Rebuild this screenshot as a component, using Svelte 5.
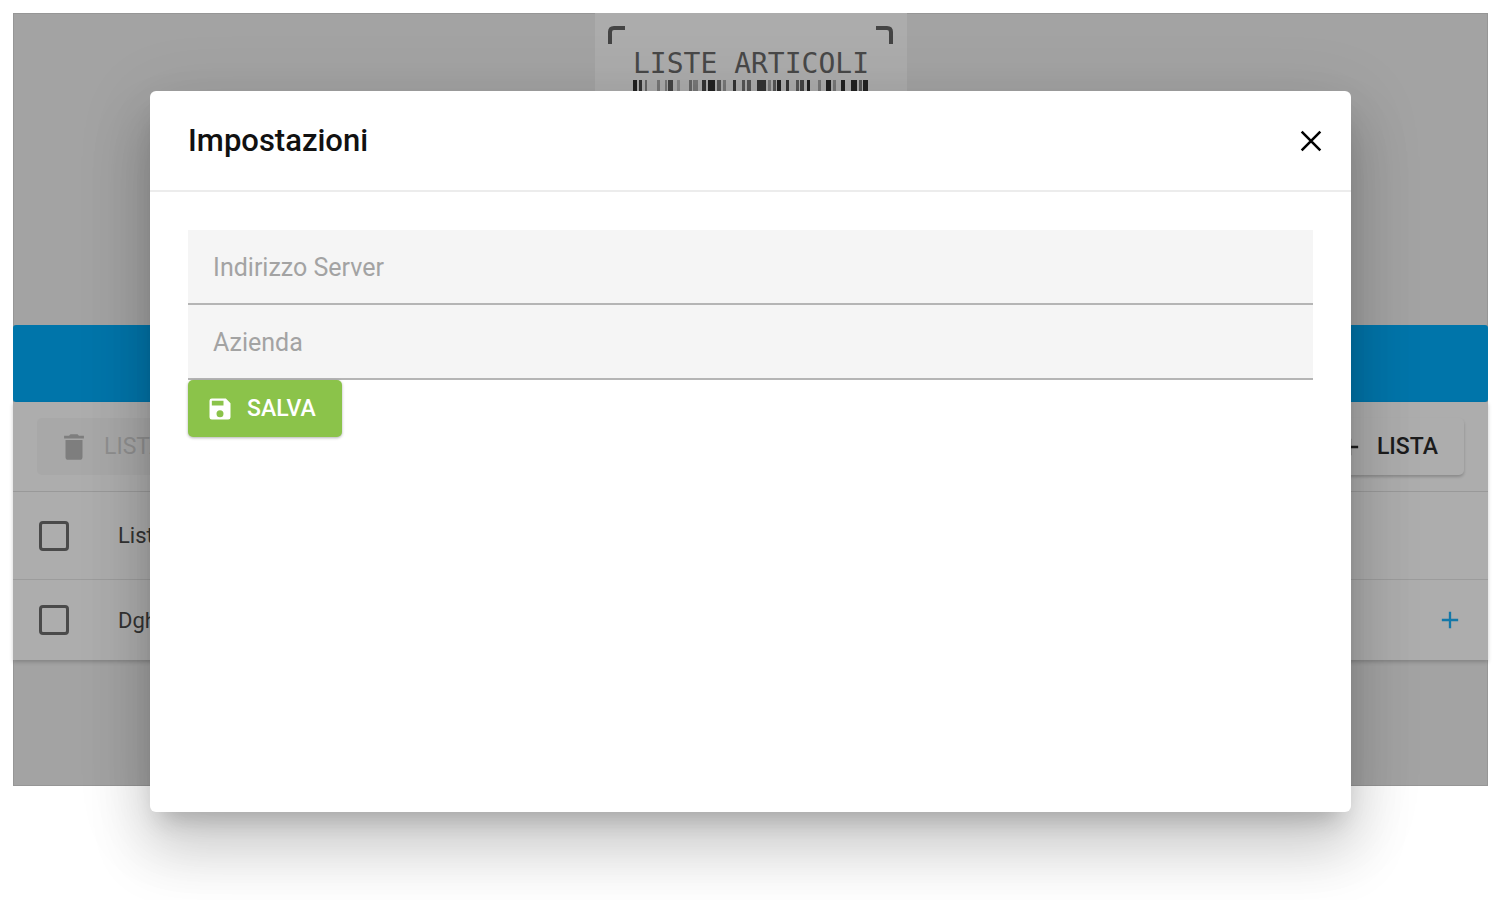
<script>
  let server = $state('');
  let company = $state('');
  let open = $state(true);

  let lists = $state([
    { name: 'Lista', selected: false, canAdd: false },
    { name: 'Dgh', selected: false, canAdd: true }
  ]);

  // [x, width, shade] of every bar under the logo text
  const bars = [
    [38, 4, '#222'], [44, 3, '#333'], [50, 2, '#666'], [62, 3, '#777'],
    [70, 2, '#777'], [73, 5, '#444'], [82, 3, '#888'], [94, 3, '#666'],
    [98, 5, '#777'], [107, 4, '#333'], [113, 7, '#222'], [122, 4, '#555'],
    [128, 3, '#777'], [138, 3, '#333'], [147, 3, '#555'], [152, 4, '#555'],
    [162, 9, '#333'], [173, 3, '#777'], [178, 3, '#555'], [182, 4, '#222'],
    [191, 3, '#333'], [201, 3, '#555'], [205, 4, '#444'], [212, 3, '#222'],
    [223, 3, '#777'], [231, 5, '#222'], [238, 3, '#777'], [246, 4, '#222'],
    [256, 6, '#222'], [264, 3, '#555'], [268, 5, '#222']
  ];
</script>

<div class="page">
  <main class="app">
    <header class="hero">
      <svg class="logo" viewBox="0 0 312 312" role="img" aria-label="Liste Articoli">
        <rect width="312" height="312" fill="#acacac" />
        <path class="corner" d="M15 31V19Q15 15 19 15H30M281 15H292Q296 15 296 19V31" />
        <text x="156" y="60" text-anchor="middle">LISTE ARTICOLI</text>
        {#each bars as [x, w, shade]}
          <rect {x} y="67" width={w} height="120" fill={shade} />
        {/each}
      </svg>
    </header>

    <div class="bar"></div>

    <section class="card">
      <div class="toolbar">
        <button class="btn muted" disabled>
          <svg class="icon-lg" viewBox="0 0 24 24"><path d="M19 4h-3.500l-1-1h-5l-1 1H5v2h14M6 19a2 2 0 0 0 2 2h8a2 2 0 0 0 2-2V7H6v12z" /></svg>
          LISTA
        </button>
        <button class="btn plain">
          <svg class="icon" viewBox="0 0 24 24"><path d="M19 13h-6v6h-2v-6H5v-2h6V5h2v6h6v2z" /></svg>
          LISTA
        </button>
      </div>
      <ul class="lists">
        {#each lists as list}
          <li>
            <label>
              <input type="checkbox" bind:checked={list.selected} />
              {list.name}
            </label>
            {#if list.canAdd}
              <button class="add" aria-label="Aggiungi">
                <svg class="icon" viewBox="0 0 24 24"><path d="M19 13h-6v6h-2v-6H5v-2h6V5h2v6h6v2z" /></svg>
              </button>
            {/if}
          </li>
        {/each}
      </ul>
    </section>
  </main>

  {#if open}
    <div class="overlay">
      <div class="dialog" role="dialog" aria-labelledby="dialog-title">
        <div class="dialog-head">
          <h2 id="dialog-title">Impostazioni</h2>
          <button class="close" aria-label="Chiudi" onclick={() => (open = false)}>
            <svg viewBox="0 0 24 24"><path d="M4 4L20 20M20 4L4 20" /></svg>
          </button>
        </div>
        <form class="dialog-body" onsubmit={(e) => e.preventDefault()}>
          <input class="field" type="text" placeholder="Indirizzo Server" aria-label="Indirizzo Server" bind:value={server} />
          <input class="field" type="text" placeholder="Azienda" aria-label="Azienda" bind:value={company} />
          <button class="btn save" type="submit">
            <svg class="icon" viewBox="0 0 24 24"><path d="M15 9H5V5h10m-3 14a3 3 0 0 1-3-3 3 3 0 0 1 3-3 3 3 0 0 1 3 3 3 3 0 0 1-3 3m5-16H5a2 2 0 0 0-2 2v14a2 2 0 0 0 2 2h14a2 2 0 0 0 2-2V7l-4-4z" /></svg>
            SALVA
          </button>
        </form>
      </div>
    </div>
  {/if}
</div>

<style>
  :global(body) {
    margin: 0;
    background: #fff;
  }
  .page {
    position: relative;
    box-sizing: border-box;
    min-height: 100vh;
    padding: 13px;
    overflow: hidden;
    font-family: Roboto, sans-serif;
    color: #222;
  }
  .page * {
    box-sizing: border-box;
  }
  .app {
    padding-bottom: 126px;
    background: #a3a3a3;
    box-shadow: inset 0 0 0 1px #969696;
  }
  .hero {
    display: flex;
    justify-content: center;
  }
  .logo {
    width: 312px;
    height: 312px;
  }
  .logo text {
    font-family: "DejaVu Sans Mono", monospace;
    font-size: 28px;
    fill: #484848;
  }
  .corner {
    fill: none;
    stroke: #444;
    stroke-width: 4;
  }
  .bar {
    height: 77px;
    border-radius: 3px;
    background: #0075aa;
  }
  .card {
    background: #adadad;
    box-shadow: 0 2px 4px rgba(0, 0, 0, 0.2);
  }
  .toolbar {
    display: flex;
    justify-content: space-between;
    padding: 16px 24px;
    border-bottom: 1px solid #999;
  }
  .btn {
    display: flex;
    align-items: center;
    gap: 13px;
    height: 57px;
    padding: 0 26px 0 20px;
    border: 0;
    border-radius: 5px;
    font-family: inherit;
    font-size: 23px;
    font-weight: 500;
  }
  .icon {
    width: 28px;
    height: 28px;
    fill: currentColor;
  }
  .icon-lg {
    width: 34px;
    height: 34px;
    fill: #7e7e7e;
  }
  .muted {
    background: #a8a8a8;
    color: #8f8f8f;
    font-weight: 400;
  }
  .plain {
    background: #adadad;
    color: #1c1c1c;
    box-shadow: 0 2px 3px rgba(0, 0, 0, 0.2);
  }
  .lists {
    margin: 0;
    padding: 0;
    list-style: none;
  }
  li {
    display: flex;
    align-items: center;
    justify-content: space-between;
    height: 80px;
    padding: 0 24px;
  }
  li:first-child {
    height: 88px;
    border-bottom: 1px solid #9c9c9c;
  }
  label {
    display: flex;
    align-items: center;
    gap: 49px;
    font-size: 22px;
    color: #333;
  }
  input[type="checkbox"] {
    appearance: none;
    width: 30px;
    height: 30px;
    margin: 0 0 0 2px;
    border: 3px solid #4a4a4a;
    border-radius: 4px;
  }
  .add {
    display: flex;
    padding: 0;
    border: 0;
    background: none;
    color: #1478a8;
  }
  .overlay {
    position: absolute;
    inset: 91px 10% 88px;
    display: flex;
  }
  .dialog {
    flex: 1;
    border-radius: 6px;
    background: #fff;
    box-shadow:
      0 17px 23px -11px rgba(0, 0, 0, 0.2),
      0 38px 59px 5px rgba(0, 0, 0, 0.14),
      0 14px 72px 6px rgba(0, 0, 0, 0.1);
  }
  .dialog-head {
    display: flex;
    align-items: center;
    justify-content: space-between;
    height: 101px;
    padding: 0 26px 0 38px;
    border-bottom: 2px solid #ececec;
  }
  h2 {
    margin: 0;
    font-size: 31px;
    font-weight: 500;
    line-height: 40px;
    color: #111;
  }
  .close {
    display: flex;
    padding: 0;
    border: 0;
    background: none;
  }
  .close svg {
    width: 28px;
    height: 28px;
    fill: none;
    stroke: #000;
    stroke-width: 2.2;
  }
  .dialog-body {
    display: flex;
    flex-direction: column;
    align-items: flex-start;
    padding: 38px;
  }
  .field {
    width: 100%;
    height: 75px;
    padding: 1px 25px 0;
    border: 0;
    border-bottom: 2px solid #b5b5b5;
    border-radius: 0;
    outline: 0;
    background: #f5f5f5;
    font-family: inherit;
    font-size: 25px;
  }
  .field::placeholder {
    color: #a3a3a3;
    opacity: 1;
  }
  .save {
    padding: 0 26px 0 18px;
    background: #8bc34a;
    color: #fff;
    box-shadow: 0 1px 3px rgba(0, 0, 0, 0.3);
  }
</style>
